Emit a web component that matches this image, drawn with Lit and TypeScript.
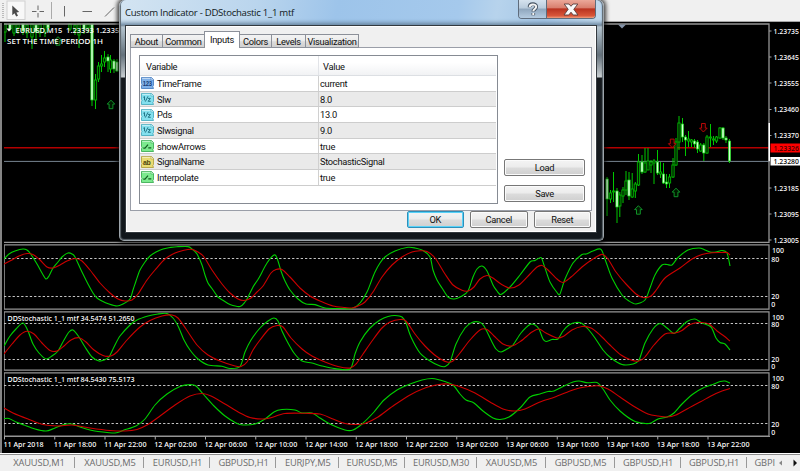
import { LitElement, html, css, svg } from "lit";
import { customElement, property } from "lit/decorators.js";

type Pt = [number, number];

/** Turns "x,y x,y ..." into a smooth cubic path. */
function smooth(src: string): string {
  const p: Pt[] = src.trim().split(/\s+/).map((s) => s.split(",").map(Number) as Pt);
  let d = `M${p[0][0]} ${p[0][1]}`;
  for (let i = 0; i < p.length - 1; i++) {
    const a = p[Math.max(0, i - 1)], b = p[i], c = p[i + 1], e = p[Math.min(p.length - 1, i + 2)];
    const k = 7;
    d += `C${(b[0] + (c[0] - a[0]) / k).toFixed(1)} ${(b[1] + (c[1] - a[1]) / k).toFixed(1)} ${(c[0] - (e[0] - b[0]) / k).toFixed(1)} ${(c[1] - (e[1] - b[1]) / k).toFixed(1)} ${c[0]} ${c[1]}`;
  }
  return d;
}

interface Study {
  top: number; height: number; label: string; width: number; hi: number; lo: number;
  scale: [string, number][]; fast: string; slow: string;
}

const STUDIES: Study[] = [
  {
    top: 244, height: 66, label: "", width: 0, hi: 258.5, lo: 296.5,
    scale: [["100", 253], ["80", 261.5], ["20", 299.3], ["0", 307.3]],
    fast: "4,259 9,254 15,251 23,249 27,250 30,253 37,264 42,273 46,279 49,276 53,268 58,262 62,257 68,253 72,254 75,257 82,272 88,284 93,293 97,298 102,301 109,304 117,306 123,304 130,299 133,290 136,281 140,270 145,262 150,256 156,252 163,249 170,247.5 177,246.7 188,246.6 192,249 197,254 202,265 205,275 208,283 213,290 218,297 224,301 230,304.5 240,306.5 245,302 249,295 253,287 257,281 260,276 267,263 274,255 277,258 281,271 285,281 290,290 298,299 306,304 315,304.6 325,308 340,308.5 352,308.5 360,303 367,292 371,282 375,272 380,263 385,257 395,251 408,247.3 415,248 423,250.5 430,257 433,270 437,280 442,288 448,297 454,299 462,296 468,291 473,277 477,269 482,266 487,271 493,285 497,291 501,294.5 510,287 520,275 530,262 535,260.5 541,257.5 544,265 550,282 557,292.5 560,294 565,279 573,263 582,254.5 586,254 593,251 601,249.3 606,262 612,278 622,295 629,301 636,304 645,300 650,288 655,275 662,265 667,264.5 672,265 678,257.5 688,250 699,248 705,250 710,252 716,252 722,250.5 727,253 730,266",
    slow: "4,264 12,260 19,256 27,253.5 33,254.5 40,260 47,267 53,268 60,265 67,261 75,258.5 82,261 90,270 100,283 110,293 118,299 125,301 132,300 138,294 147,280 155,270 165,259 175,253 183,250.5 191,249.3 198,252 204,257 212,270 222,284 230,293 238,299 244,300.5 251,298 257,292 263,286 271,273 276,269.5 282,269.5 290,277 300,288 310,296 320,301 333,306 345,307.5 352,308 358,306 365,302 373,292 382,277 392,265 402,257 412,252 420,250.8 427,251.5 435,258 445,274 453,285 462,290.3 468,291 474,287 480,279 487,275.5 493,278 501,284 510,288 519,285 530,274 537,267 542,265.5 548,270 557,279 563,282.5 571,277 582,267 593,259 602,254.4 608,259 616,272 626,284 636,294 643,297.5 651,296 657,289 665,278 680,268 692,259 702,254.5 712,252.7 722,252.5 727,252.5 730,255",
  },
  {
    top: 311, height: 60, label: "DDStochastic 1_1 mtf 34.5474 51.2650", width: 127, hi: 323.5, lo: 359.5,
    scale: [["100", 320], ["80", 327], ["20", 362], ["0", 368.8]],
    fast: "4,346 10,336 16,329 23,323 28,331 33,344 39,353 46,359 52,356 58,351 64,340 69,332 73,330 79,337 85,347 92,357 99,361 104,360 109,357 114,347 120,336 130,325 137,320 148,316 158,314 167,313.5 173,318 178,326 184,340 190,350 198,359 208,365 222,366.3 230,368.5 240,366.5 245,352 251,340 260,328 268,321 274,318 278,321 282,331 288,343 294,353 302,361 312,363 322,366 335,368.6 350,369 355,354 360,342 370,328 380,320 388,316.5 395,315.5 402,317 406,323 411,337 420,353 430,361 440,366 445,366.5 450,362 456,344 465,328 472,322.5 479,322 484,326 491,340 496,349 501,352 507,349 513,345 521,333 530,324.5 535,325 539,329 543,339 546,341.5 552,339.5 558,339 563,331 569,325 576,322.5 582,323.5 588,329 595,338 603,350 611,358 622,364.5 633,364 639,360 645,343 653,329 660,323.5 667,328 674,333.5 680,328 687,321.5 695,319 702,323 711,327 716,338 720,342.5 725,344 730,350",
    slow: "4,354 12,344 20,335 27,331.3 34,334 42,343 50,350.5 57,351 64,346 71,340 79,337.7 86,342 94,350 103,355.5 111,356 117,352 127,340 140,327 150,320.5 162,316 172,315 178,318 186,329 197,345 208,355 220,361 235,366 241,366.5 247,362 253,350 260,340 269,329 277,325.5 283,327 291,338 302,349 312,356 325,362 338,366.5 350,368 356,364 363,354 372,341 382,328 390,322 400,319.5 406,321 415,334 425,346 436,356 447,362 453,361 460,353 470,340 480,330 487,329.5 494,336 503,344 512,346 521,341 532,332 539,329 546,333 557,338 564,336 572,330 582,326.5 591,328 600,335 610,345 621,355 631,360 639,361 645,357 654,345 665,334 675,333 682,330.5 690,324.5 700,322.5 709,324 717,331 724,336 730,341",
  },
  {
    top: 372, height: 65, label: "DDStochastic 1_1 mtf 84.5430 75.5173", width: 127, hi: 385.5, lo: 423.5,
    scale: [["100", 381], ["80", 389], ["20", 427], ["0", 434.8]],
    fast: "4,418.5 9,418.5 16,422 24,425 35,429 46,431 54,428.5 64,424.5 72,424 80,427 90,430 98,431.5 115,433 124,430 136,426 145,419 155,405 167,394 180,386.5 190,384.6 196,386 204,395 214,406 225,416 236,423 243,425 255,424 265,419 274,412 282,409.5 295,410 302,413 312,413 320,418 330,424 345,430 353,430 362,424 374,412 384,400 397,390 410,384 422,380 432,378.5 440,380 449,383 454,386 460,394 466,400 474,403 483,411 493,418 500,419.5 509,417 520,408 530,397 540,394 548,391.5 554,391 565,385.5 573,382 579,381 588,382.8 597,382.5 603,389 610,400 620,411 634,421 645,423.5 651,423 658,419 667,417 674,413 682,404 693,394 703,388 714,384 720,381.5 725,381 730,383",
    slow: "4,408 13,413 28,419 43,424.5 58,426 72,425 90,428 110,430.5 125,431 137,429.5 147,425 160,416 175,405 190,396 202,393.5 211,396 225,404 240,413 250,417.5 262,419 270,418 285,413.5 305,413.3 320,414 333,419 345,423.5 355,424.5 365,423.5 378,417 393,406 410,395 425,388 439,384.5 448,384 458,386 475,393 490,402 503,409 515,411 525,409 540,402 555,397 570,391 582,387.5 598,385.8 608,389 620,397 635,407 648,414 658,416 667,417 676,415 687,409 700,402 712,395.5 722,391 730,388.5",
  },
];

/* x, high, low, body top, body bottom, filled */
const CANDLES: [number, number, number, number, number, number][] = [
  [5, 24, 42, 24, 32, 0], [10, 24, 31, 24, 29, 1], [14, 24, 36, 24, 33, 0], [18, 24, 34, 24, 28, 0],
  [23, 24, 35, 24, 31, 1], [27, 24, 38, 25, 33, 0], [32, 24, 49, 24, 37, 0], [36, 24, 42, 25, 32, 1],
  [40, 24, 37, 24, 33, 0], [45, 24, 37, 24, 32, 0], [48, 24, 32, 24, 28, 1],
  [70, 24, 31, 24, 29, 0], [75, 24, 35, 25, 31, 0], [79, 24, 48, 24, 35, 0], [84, 24, 34, 24, 29, 1], [88, 24, 33, 24, 28, 0],
  [92, 24, 106, 24, 100, 1], [95.5, 74, 109, 80, 100, 0], [98.5, 62, 82, 66, 79, 0], [101.5, 55, 72, 64, 66, 0],
  [104.5, 51, 67, 58, 62, 0], [108, 54, 72, 57, 61, 1], [110.5, 55, 73, 60, 69, 0], [114, 59, 73, 61, 69, 1], [117, 59, 72, 62, 71, 1],
  [607, 177, 216, 179, 199, 1], [610.5, 190, 203, 193, 199, 0], [613.5, 172, 202, 191, 192, 0], [617, 188, 223, 191, 207, 1],
  [619.8, 192, 217, 195, 206, 0], [623, 187, 203, 190, 196, 0], [626, 171, 195, 181, 190, 0], [629, 172, 200, 180, 196, 1],
  [632.2, 173, 198, 189, 197, 0], [635.3, 182, 198, 184, 191, 0], [638.5, 154, 186, 162, 185, 0], [642, 155, 174, 162, 172, 1],
  [645, 148, 173, 163, 172, 0], [648, 148, 170, 161, 170, 0], [651, 160, 173, 162, 165, 0], [654, 159, 184, 161, 163, 0],
  [657.5, 150, 175, 162, 173, 1], [660.5, 162, 178, 172, 174, 0], [663.5, 163, 184, 174, 183, 1], [666.5, 174, 188, 182, 184, 1],
  [669.5, 174, 188, 177, 183, 0], [673, 158, 178, 165, 177, 0], [676, 138, 166, 142, 165, 0], [679, 116, 150, 123, 142, 0],
  [682.5, 118, 142, 124, 137, 1], [685.5, 135, 156, 137, 140, 1], [688.5, 131, 147, 139, 141, 0], [691.5, 139, 147, 140, 142, 0],
  [694.5, 139, 148, 141, 144, 1], [697.5, 140, 153, 142, 149, 1], [700.7, 143, 152, 145, 151, 0], [703.8, 143, 161, 145, 153, 1],
  [707, 135, 154, 137, 153, 0], [710.5, 124, 147, 137, 138, 0], [713.5, 136, 145, 139, 140, 0], [716.5, 136, 143, 137, 141, 0],
  [720, 127, 139, 128, 138, 0], [723, 127, 140, 128, 138, 1], [726, 136, 143, 138, 140, 1], [729.5, 139, 163, 141, 161, 1],
];

const PRICES: [string, number][] = [
  ["1.23735", 31], ["1.23645", 57], ["1.23555", 83], ["1.23460", 109.5], ["1.23370", 135.5],
  ["1.23185", 188], ["1.23095", 214], ["1.23005", 240],
];

const TIMES = ["11 Apr 2018", "11 Apr 18:00", "11 Apr 22:00", "12 Apr 02:00", "12 Apr 06:00", "12 Apr 10:00", "12 Apr 14:00",
  "12 Apr 18:00", "12 Apr 22:00", "13 Apr 02:00", "13 Apr 06:00", "13 Apr 10:00", "13 Apr 14:00", "13 Apr 18:00", "13 Apr 22:00"];

const chartText = css`
  text { font: 500 7.6px "Noto Sans", "DejaVu Sans", sans-serif; fill: #fff; }
`;

@customElement("price-chart")
class PriceChart extends LitElement {
  static styles = [chartText, css`
    :host { display: block; height: 220px; }
    svg { display: block; }
    .wick { stroke: #00c800; stroke-width: 1; }
    .body { fill: #001c00; stroke: #00b400; stroke-width: 0.9; }
    .solid { fill: #d4ffd4; stroke: #16d816; stroke-width: 0.7; }
    .up { fill: #001800; stroke: #12a02c; stroke-width: 0.9; }
    .down { fill: #180000; stroke: #c80808; stroke-width: 0.9; }
    .frame { fill: none; stroke: #959595; stroke-width: 1.3; }
    .bid { stroke: #b40000; stroke-width: 1.6; }
    .last { stroke: #778491; }
    .on-red { fill: #3a0000; }
    .on-white { fill: #000; }
  `];
  render() {
    const arrow = (x: number, y: number, up: boolean) => svg`<path class=${up ? "up" : "down"}
      transform="translate(${x} ${y}) scale(1 ${up ? 1 : -1})" d="M0-4.3L3.8-.4H1.9V4.2H-1.9V-.4H-3.8Z"/>`;
    return html`<svg width="796" height="220" viewBox="4 23 796 220">
      <line class="bid" x1="4" x2="770" y1="147.700" y2="147.700" />
      <line class="last" x1="4" x2="770" y1="161.400" y2="161.400" />
      ${CANDLES.map(([x, h, l, t, b, f]) => svg`<line class="wick" x1=${x} x2=${x} y1=${h} y2=${l} />
        <rect class=${f ? "solid" : "body"} x=${x - 1.15} y=${t} width="2.3" height=${b - t} />`)}
      ${arrow(58, 41, true)}${arrow(111, 104.5, true)}${arrow(638.4, 210, true)}${arrow(676, 192.5, true)}
      ${arrow(672.2, 143.3, false)}${arrow(703.4, 127.7, false)}
      <path class="frame" d="M4 24H769V242.500H4" />
      <path d="M618 24.500h8l-4 4z" fill="#8493a8" />
      <path d="M6.500 28.500h5l-2.500 3z" fill="#fff" />
      <text x="15.500" y="33.300" textLength="108" lengthAdjust="spacingAndGlyphs">EURUSD,M15&#160; 1.23393 1.23358</text>
      <text x="7" y="43.500" textLength="96" lengthAdjust="spacingAndGlyphs">SET THE TIME PERIOD 1H</text>
      ${PRICES.map(([t, y]) => svg`<line x1="769" x2="771.500" y1=${y} y2=${y} stroke="#a0a0a0" />
        <text x="773.500" y=${y + 2.8} textLength="25.500" lengthAdjust="spacingAndGlyphs">${t}</text>`)}
      <rect x="768.500" y="123" width="1.500" height="38" fill="#fff" />
      <rect x="770.500" y="143.500" width="29.500" height="9" fill="#f00" />
      <text class="on-red" x="773.500" y="150.900" textLength="25.500" lengthAdjust="spacingAndGlyphs">1.23326</text>
      <rect x="770.500" y="157" width="29.500" height="8.500" fill="#fff" />
      <text class="on-white" x="773.500" y="164.200" textLength="25.500" lengthAdjust="spacingAndGlyphs">1.23280</text>
    </svg>`;
  }
}

@customElement("study-panel")
class StudyPanel extends LitElement {
  static styles = [chartText, css`
    :host { display: block; }
    svg { display: block; }
    .frame { fill: none; stroke: #959595; stroke-width: 1.2; }
    .level { stroke: #c4c4c4; stroke-width: 1; stroke-dasharray: 2.3 2; }
    .fast { fill: none; stroke: #00d000; stroke-width: 1.1; }
    .slow { fill: none; stroke: #cc0000; stroke-width: 1.1; }
  `];
  @property({ attribute: false }) study!: Study;
  render() {
    const s = this.study;
    return html`<svg width="796" height=${s.height} viewBox="4 ${s.top} 796 ${s.height}">
      <path class="frame" d="M4.2 ${s.top + 0.8}H769V${s.top + s.height - 0.8}H4.2Z" />
      ${[s.hi, s.lo].map((y) => svg`<line class="level" x1="4" x2="769" y1=${y} y2=${y} />`)}
      <path class="fast" d=${smooth(s.fast)} />
      <path class="slow" d=${smooth(s.slow)} />
      ${s.label ? svg`<text x="7.5" y=${s.top + 10} textLength=${s.width} lengthAdjust="spacingAndGlyphs">${s.label}</text>` : ""}
      ${s.scale.map(([t, y]) => svg`<text x=${t.length === 3 ? 772 : 771.2} y=${y}
        textLength=${t.length * 4} lengthAdjust="spacingAndGlyphs">${t}</text>`)}
    </svg>`;
  }
}

type Kind = "int" | "num" | "bool" | "str";

@customElement("type-icon")
class TypeIcon extends LitElement {
  static styles = css`
    :host { display: block; width: 13px; height: 12px; }
    svg { display: block; }
    text { font: bold 6.5px "Liberation Sans", sans-serif; }
  `;
  @property() kind: Kind = "int";
  render() {
    const [bg, edge, ink, label, x, w] = {
      int: ["#7fb0e8", "#3c76bd", "#163c74", "123", 1.7, 9],
      num: ["#84e0ee", "#3ba6bb", "#176a7c", "", 0, 0],
      bool: ["#7cea8e", "#2ea648", "#125c20", "", 0, 0],
      str: ["#e9dc72", "#ab9b32", "#50480e", "ab", 2, 7.5],
    }[this.kind] as [string, string, string, string, number, number];
    const mark = {
      bool: svg`<path d="M2.300 8.200H4L7 4.700M7.300 7.800H10.300" fill="none" stroke=${ink} stroke-width="1.200" />`,
      num: svg`<path d="M2.300 4.300L3.500 3.600V7.300M4.300 8.600L7 3.300M7 5.400H9.400L7.200 8.300H9.700" fill="none" stroke=${ink} stroke-width=".9" />`,
    }[this.kind as "bool" | "num"];
    return html`<svg width="13" height="12" viewBox="0 0 13 12">
      <path d="M.5.5H10.500L12.500 2.500V8.500L11.800 9.500L12.500 11.500H.5V8.500L1 7.500L.5 6.500Z" fill=${bg} stroke=${edge} stroke-width=".8" />
      <path d="M1.200 1.300H9.800" stroke="#fff" stroke-opacity=".6" />
      <path d="M10 .5V3H12.500" fill="#fff" fill-opacity=".7" stroke=${edge} stroke-width=".5" />
      ${mark ?? svg`<text x=${x} y="8.600" textLength=${w} lengthAdjust="spacingAndGlyphs" fill=${ink}>${label}</text>`}
    </svg>`;
  }
}

const ROWS: [Kind, string, string][] = [
  ["int", "TimeFrame", "current"], ["num", "Slw", "8.0"], ["num", "Pds", "13.0"], ["num", "Slwsignal", "9.0"],
  ["bool", "showArrows", "true"], ["str", "SignalName", "StochasticSignal"], ["bool", "Interpolate", "true"],
];

@customElement("indicator-dialog")
class IndicatorDialog extends LitElement {
  static styles = css`
    :host { display: block; box-sizing: border-box; width: 485px; height: 241px; padding: 0 6px 7px 5px;
      font: 9.3px/12px Roboto, "Noto Sans", sans-serif; letter-spacing: -0.3px; color: #101010;
      border: 1px solid #9da5ab; border-top: 0; border-radius: 6px 6px 5px 5px;
      background: linear-gradient(#a9cbea 0, #b8d4ec 20px, #6d8194 25px, #b4c4cf 27px, #64717b 55px, #c8ced1 77px, #15191d 78px, #11171c 100%);
      box-shadow: 0 0 4px 2px #000b, inset 0 0 1px 1px #5c656c; }
    .title { display: flex; justify-content: space-between; height: 25px; margin: 0 -4px;
      background: linear-gradient(100deg, #d3e4f2 0, #bad5ed 28%, #9dc4ea 45%, #a5c9ec 70%, #b7d3ec 78%, #a5c7e7 88%, #c4dbee 100%);
      box-shadow: inset 0 -5px 4px -3px #64809a; border-radius: 5px 5px 0 0; }
    .name { padding: 6px 0 0 4px; font: 9.6px/13px "Open Sans", "Noto Sans", sans-serif; letter-spacing: -0.28px; color: #101820; }
    .controls { display: flex; height: 18px; margin-right: 5px; border: 1px solid #5f6c7c; border-top: 0; border-radius: 0 0 4px 4px; overflow: hidden; }
    .help, .close { display: grid; place-items: center; }
    .help { width: 27px; background: linear-gradient(#d5e2ee, #b9cbdc 45%, #8fa6bd 50%, #b5cbe0); border-right: 1px solid #5f6c7c; }
    .close { width: 48px; background: linear-gradient(#eba899, #d9806f 42%, #b93320 50%, #d9573a 88%, #f0a080); }
    .client { box-sizing: border-box; height: 208px; padding: 7px 4px 0 4px; background: #f0f0f0; border: 1px solid #33393e; box-shadow: inset 0 0 0 1px #fff; }
    .tabs { display: flex; align-items: flex-end; height: 15px; padding-left: 0; position: relative; z-index: 1; margin-bottom: -1px; }
    .tab { box-sizing: border-box; height: 14px; border: 1px solid #8c9099; border-left-width: 0; text-align: center; line-height: 14px;
      background: linear-gradient(#f3f3f3, #ebebeb 50%, #dcdcdc 55%, #d0d0d0); }
    .tab:first-child { border-left-width: 1px; }
    .active { height: 17px; margin: -2px 0 0 -1px; line-height: 15px; border-left-width: 1px; border-bottom: 0; background: #fff; align-self: flex-start; }
    .page { display: flex; box-sizing: border-box; height: 164px; border: 1px solid #9a9ea8; background: #fff; padding: 7px 0 0 8px; gap: 6px; }
    .table { box-sizing: border-box; width: 359px; height: 149px; border: 1px solid #868b93; }
    .row { display: grid; grid-template-columns: 16px 161px 1fr; align-items: center; box-sizing: border-box; height: 15.7px; margin-right: 1px; border-bottom: 1px solid #cdcdcd; padding-left: 1px; }
    .row:nth-child(odd) { background: #eaeaea; }
    .row .key, .row .value { padding-top: 1px; line-height: 13.7px; }
    .row .value { border-left: 1px solid #d0d0d0; padding-left: 1px; }
    .row .head { grid-column: span 2; padding: 2px 0 0 5px; line-height: 17px; }
    .row:first-child { height: 20px; background: linear-gradient(#fff 35%, #f1f2f4); border-color: #dcdfe3; }
    .row:first-child .value { padding: 2px 0 0 4px; line-height: 17px; border-color: #e2e4e8; }
    .side { display: flex; flex-direction: column; gap: 9px; padding-top: 104px; }
    .btn { box-sizing: border-box; width: 81px; height: 17px; border: 1px solid #777; border-radius: 2px; text-align: center; line-height: 16px;
      background: linear-gradient(#f4f4f4, #ececec 48%, #dcdcdc 52%, #cfcfcf); box-shadow: inset 0 0 0 1px #fbfbfb; }
    .actions { display: flex; gap: 6px; justify-content: flex-end; margin: 0 1px 0 0; }
    .actions .btn { width: 57.5px; }
    .actions .primary { border-color: #2d8fba; box-shadow: inset 0 0 0 1px #58d2f8; }
  `;
  render() {
    const tabs: [string, number][] = [["About", 33], ["Common", 42], ["Inputs", 36], ["Colors", 32], ["Levels", 34], ["Visualization", 53]];
    return html`
      <div class="title">
        <span class="name">Custom Indicator - DDStochastic 1_1 mtf</span>
        <div class="controls">
          <div class="help"><svg width="12" height="15" viewBox="0 0 12 15"><path d="M2.500 5.200C2.500 1 9.300 1.300 9.300 4.700C9.300 7 6.300 7 6.300 9.500M6.300 11V13.300" fill="none" stroke="#475463" stroke-width="3.600"/><path d="M2.700 5C2.700 1.600 9.200 1.700 9.200 4.700C9.200 7 6.300 7 6.300 9.300M6.300 11V13" fill="none" stroke="#f4f4f4" stroke-width="2"/></svg></div>
          <div class="close"><svg width="16" height="13" viewBox="0 0 16 13"><path d="M1.200 1H6L8 3.300L10 1H14.800L10.800 6.300L15 12H10.200L8 9.200L5.800 12H1L5.200 6.300Z" fill="#fafafa" stroke="#563d3c" stroke-width=".9"/></svg></div>
        </div>
      </div>
      <div class="client">
        <div class="tabs">${tabs.map(([t, w]) => html`<div class="tab ${t === "Inputs" ? "active" : ""}" style="width:${w}px">${t}</div>`)}</div>
        <div class="page">
          <div class="table">
            <div class="row"><span class="head">Variable</span><span class="value">Value</span></div>
            ${ROWS.map(([k, n, v]) => html`<div class="row"><type-icon .kind=${k}></type-icon><span class="key">${n}</span><span class="value">${v}</span></div>`)}
          </div>
          <div class="side"><div class="btn">Load</div><div class="btn">Save</div></div>
        </div>
        <div class="actions"><div class="btn primary">OK</div><div class="btn">Cancel</div><div class="btn">Reset</div></div>
      </div>`;
  }
}

@customElement("app-root")
class AppRoot extends LitElement {
  static styles = [chartText, css`
    :host { display: flex; flex-direction: column; position: relative; width: 800px; height: 471px; overflow: hidden; background: #000; }
    .toolbar { box-sizing: border-box; height: 22px; background: #f0f0f0; border-bottom: 1px solid #a5a5a5; }
    .toolbar svg, .axis { display: block; }
    .charts { display: flex; flex-direction: column; gap: 1px; height: 430px; padding-left: 4px; margin-top: 1px; box-sizing: border-box;
      box-shadow: inset 2px 0 0 #858585; }
    .axis { flex: none; margin-top: -2px; }
    .windows { display: flex; align-items: center; flex: 1; background: #f0f0f0; border-top: 1px solid #fff; box-shadow: inset 0 1px 0 #8c8c8c; padding: 0 0 0 2px; position: relative; overflow: hidden;
      font: 9.3px/11px "Open Sans", "Noto Sans", sans-serif; letter-spacing: -0.15px; color: #6c6c6c; }
    .win { box-sizing: border-box; flex: none; height: 11px; line-height: 11px; text-align: center; border-right: 1px solid #999; padding-left: 2px; }
    .win:last-of-type { width: 29px; white-space: nowrap; border: 0; text-align: left; padding-left: 8px; }
    .dialog { position: absolute; left: 119px; top: 0; }
  `];
  render() {
    const wins: [string, number][] = [["XAUUSD,M1", 73], ["XAUUSD,M5", 69], ["EURUSD,H1", 66], ["GBPUSD,H1", 66], ["EURJPY,M5", 62.5],
      ["EURUSD,M5", 66], ["EURUSD,M30", 72], ["XAUUSD,M5", 69], ["GBPUSD,M5", 69], ["GBPUSD,H1", 66], ["GBPUSD,H1", 66]];
    return html`
      <div class="toolbar"><svg width="800" height="21" viewBox="0 0 800 21">
        <rect x="7" y="1" width="18" height="18.500" fill="#f8f8f8" stroke="#d0d0d0"/>
        <path d="M3 3V19" stroke="#bbb" stroke-width="2" stroke-dasharray="1 1"/>
        <path d="M12.300 5.500V15.200L14.500 13.300L16.200 16.500L18 15.700L16.400 12.500L19.200 12Z" fill="#4a4a4a"/>
        <path d="M38 5.500V10M38 13V17.500M32 11.500H36.500M39.500 11.500H44M64.500 6V16.500M82.500 11.500H92M105 16.500L114 7.500" fill="none" stroke="#666"/>
        <path d="M51.500 2V19" stroke="#aaa"/>
      </svg></div>
      <div class="charts">
        <price-chart></price-chart>
        ${STUDIES.map((s) => html`<study-panel .study=${s}></study-panel>`)}
        <svg class="axis" width="796" height="17" viewBox="4 436 796 17">
          <path d="M4 436.500H770" stroke="#959595"/>
          ${TIMES.map((t, i) => svg`<path d="M${4.5 + i * 50.25} 436.500v3" stroke="#aaa"/><text x=${3.5 + i * 50.25} y="446.500"
            textLength=${i ? 42.5 : 40} lengthAdjust="spacingAndGlyphs">${t}</text>`)}
        </svg>
      </div>
      <div class="windows">
        ${wins.map(([t, w]) => html`<div class="win" style="width:${w}px">${t}</div>`)}
        <div class="win">GBPI</div>
        <svg width="24" height="16" viewBox="0 0 24 16"><path d="M6 5.500V10.500L3 8Z" fill="#888"/><path d="M17.500 4.500V11.500L21 8Z" fill="#111"/></svg>
      </div>
      <indicator-dialog class="dialog"></indicator-dialog>`;
  }
}
